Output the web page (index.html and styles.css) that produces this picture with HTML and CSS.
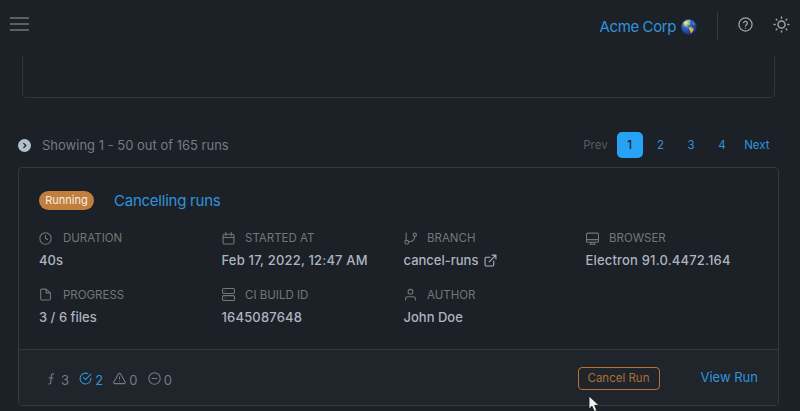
FILE: index.html
```html
<!DOCTYPE html>
<html lang="en">
<head>
<meta charset="utf-8">
<title>Runs</title>
<link rel="stylesheet" href="styles.css">
</head>
<body>
<svg width="0" height="0" class="defs">
  <symbol id="clock" viewBox="0 0 24 24"><circle cx="12" cy="12" r="10.500"/><path d="M12 6v6l4 2"/></symbol>
  <symbol id="calendar" viewBox="0 0 24 24"><rect x="2" y="4" width="20" height="18" rx="2"/><path d="M7 1v6M17 1v6M2 10h20"/></symbol>
  <symbol id="branch" viewBox="0 0 24 24"><path d="M4 2v13M20 9a11 11 0 0 1-11 9"/><circle cx="20" cy="5" r="3"/><circle cx="5" cy="19" r="3.500"/></symbol>
  <symbol id="monitor" viewBox="0 0 24 24"><rect x="1" y="2" width="22" height="17" rx="2"/><path d="M1 14h22M7 22.500h10M9 19v3M15 19v3"/></symbol>
  <symbol id="file" viewBox="0 0 24 24"><path d="M13 2H5a2 2 0 0 0-2 2v16a2 2 0 0 0 2 2h14a2 2 0 0 0 2-2V9zM13 2v7h7"/></symbol>
  <symbol id="server" viewBox="0 0 24 24"><rect x="1" y="1" width="22" height="9" rx="2"/><rect x="1" y="14" width="22" height="9" rx="2"/><path d="M5.500 5.500h.01M5.500 18.500h.01"/></symbol>
  <symbol id="user" viewBox="0 0 24 24"><path d="M21 22v-2a4 4 0 0 0-4-4H7a4 4 0 0 0-4 4v2"/><circle cx="12" cy="7" r="4.500"/></symbol>
  <symbol id="external" viewBox="0 0 24 24"><path d="M18 13v7a2 2 0 0 1-2 2H4a2 2 0 0 1-2-2V8a2 2 0 0 1 2-2h7M15 2h7v7M9.500 14.500L22 2"/></symbol>
  <symbol id="check" viewBox="0 0 24 24"><path d="M22 11v1a10 10 0 1 1-6-9.100M22 4L12 14l-3.500-3.500"/></symbol>
  <symbol id="warn" viewBox="0 0 24 24"><path d="M10.300 3.400L1.500 18.500a2 2 0 0 0 1.700 3h17.600a2 2 0 0 0 1.700-3L13.700 3.400a2 2 0 0 0-3.400 0zM12 9v4M12 17h.01"/></symbol>
  <symbol id="minus" viewBox="0 0 24 24"><circle cx="12" cy="12" r="10.500"/><path d="M7.500 12h9"/></symbol>
  <symbol id="help" viewBox="0 0 24 24"><circle cx="12" cy="12" r="10.500"/><path d="M9 9a3.100 3.100 0 0 1 6 1c0 2-3 2.500-3 4.500M12 17.800h.01"/></symbol>
  <symbol id="sun" viewBox="0 0 24 24"><circle cx="12" cy="12" r="5"/><path d="M12 1.500v1.500M12 21v1.500M1.500 12h1.500M21 12h1.500M4.500 4.500l1 1M18.500 18.500l1 1M4.500 19.500l1-1M18.500 5.500l1-1"/></symbol>
</svg>
<header class="topbar">
  <div class="burger"><i></i><i></i><i></i></div>
  <a class="org">Acme Corp
    <svg class="globe" viewBox="0 0 16 16"><defs><radialGradient id="sea" cx=".35" cy=".3" r=".75"><stop offset="0" stop-color="#5b9be4"/><stop offset=".5" stop-color="#2558b4"/><stop offset="1" stop-color="#172b68"/></radialGradient></defs><circle cx="8" cy="8" r="7.800" fill="url(#sea)"/><path d="M2 4Q4 1 7.500.8L10 2 8.500 3.800 9.500 5 7 6.300 6.500 8 4.500 7 3 7.300z" fill="#a9b987"/><path d="M3 3.500L6 2l1 2-2.500 2z" fill="#e7e4b0"/><path d="M7.500 8.500L10 8l3 2-1 2-2 2.500L9 12z" fill="#d9b13c"/><path d="M11 3l2 1 1 2-2-.5z" fill="#6c985c"/></svg>
  </a>
  <span class="rule"></span>
  <svg class="icon tool"><use href="#help"/></svg>
  <svg class="icon tool sun"><use href="#sun"/></svg>
</header>
<main>
  <section class="previous"></section>
  <div class="listbar">
    <svg class="toggle" viewBox="0 0 12 12"><circle cx="6" cy="6" r="6"/><path d="M5 3.800L7.200 6 5 8.200"/></svg>
    <span class="showing">Showing 1 - 50 out of 165 runs</span>
    <nav class="pages"><a class="prev">Prev</a><a class="current">1</a><a>2</a><a>3</a><a>4</a><a class="next">Next</a></nav>
  </div>
  <article class="card">
    <div class="body">
      <div class="heading"><span class="badge">Running</span><a class="title">Cancelling runs</a></div>
      <dl class="facts">
        <div><dt><svg class="icon"><use href="#clock"/></svg><span>DURATION</span></dt><dd>40s</dd></div>
        <div><dt><svg class="icon"><use href="#calendar"/></svg><span>STARTED AT</span></dt><dd class="numeric">Feb 17, 2022, 12:47 AM</dd></div>
        <div><dt><svg class="icon"><use href="#branch"/></svg><span>BRANCH</span></dt><dd>cancel-runs<svg class="icon ext"><use href="#external"/></svg></dd></div>
        <div><dt><svg class="icon"><use href="#monitor"/></svg><span>BROWSER</span></dt><dd class="numeric">Electron 91.0.4472.164</dd></div>
        <div><dt><svg class="icon"><use href="#file"/></svg><span>PROGRESS</span></dt><dd>3 / 6 files</dd></div>
        <div><dt><svg class="icon"><use href="#server"/></svg><span>CI BUILD ID</span></dt><dd class="numeric">1645087648</dd></div>
        <div><dt><svg class="icon"><use href="#user"/></svg><span>AUTHOR</span></dt><dd>John Doe</dd></div>
      </dl>
    </div>
    <footer class="foot">
      <div class="stats">
        <span class="stat flaky"><svg class="fn" viewBox="0 0 8 12"><path d="M7 1.300C5.300.4 4.500 1.300 4.300 3L3.800 9C3.600 11 2.600 11.300 1.500 10.800M1.500 5h5"/></svg>3</span>
        <span class="stat passed"><svg class="icon"><use href="#check"/></svg>2</span>
        <span class="stat failed"><svg class="icon"><use href="#warn"/></svg>0</span>
        <span class="stat"><svg class="icon"><use href="#minus"/></svg>0</span>
      </div>
      <button class="cancel">Cancel Run</button>
      <a class="view">View Run</a>
    </footer>
  </article>
</main>
<svg class="cursor" viewBox="0 0 12 18"><path d="M1 1v13l3-2.800 2.300 5.300 2.500-1.100L6.600 10.300H11z"/></svg>
</body>
</html>
```
FILE: styles.css
```css
* { box-sizing: border-box; }
body { margin: 0; width: 800px; height: 411px; overflow: hidden; background: #1c2027; color: #adb5c0; font-family: Inter, sans-serif; font-size: 13px; }
svg { display: block; flex: none; }
.defs { position: absolute; }
.icon { width: 13px; height: 13px; fill: none; stroke: currentColor; stroke-width: 2; stroke-linecap: round; stroke-linejoin: round; }
.topbar { height: 55px; display: flex; align-items: center; padding: 0 11px 4px 10px; }
.burger { width: 19px; height: 14px; display: flex; flex-direction: column; justify-content: space-between; margin-right: auto; margin-top: -3px; }
.burger i { height: 2px; background: #5c5e62; }
.org { display: flex; align-items: center; gap: 5px; font-size: 15px; letter-spacing: -.4px; color: #2e95dc; margin-top: 2px; }
.globe { width: 16px; height: 16px; }
.rule { width: 1px; height: 28px; background: #363b43; margin: 0 20px 0 20px; }
.tool { width: 15px; height: 15px; color: #a1a6ad; margin-top: -3px; }
.sun { margin-left: 20px; width: 17px; height: 17px; margin-right: -1px; }
.previous { height: 43px; margin: 0 25px 0 22px; border: 1px solid #30353b; border-top: 0; border-radius: 0 0 5px 5px; }
.listbar { display: flex; align-items: center; height: 26px; margin: 34px 31px 9px 18px; }
.toggle { width: 13px; height: 13px; fill: #b3bfcb; }
.toggle path { fill: none; stroke: #1c2027; stroke-width: 1.2; }
.showing { margin-left: 11px; font-size: 13px; color: #747b86; }
.pages { display: flex; align-items: center; margin-left: auto; font-size: 11.5px; color: #2e95dc; }
.pages a { width: 30.7px; text-align: center; }
.pages .prev { width: auto; color: #565c65; margin-right: 9px; }
.pages .current { width: 26px; height: 26px; line-height: 26px; border-radius: 5px; background: #27a3f5; color: #14202c; font-weight: 500; margin-right: 2.5px; }
.pages .next { width: auto; margin-left: 7px; margin-right: -.6px; }
.card { height: 239px; margin: 0 21px 0 18px; border: 1px solid #343940; border-radius: 4px; overflow: hidden; }
.body { height: 181px; padding: 22px 0 0 20px; }
.heading { display: flex; align-items: center; height: 20px; }
.badge { width: 55px; height: 19px; line-height: 19px; border-radius: 10px; background: #c27e3c; color: #f5eee7; font-size: 11px; text-align: center; }
.title { margin-left: 20px; font-size: 15px; letter-spacing: -.24px; color: #2e95dc; }
.facts { display: grid; grid-template-columns: repeat(4, 182px); grid-auto-rows: 56.5px; margin: 20px 0 0; }
dt { display: flex; align-items: center; height: 16px; color: #747779; font-size: 11.5px; }
dt .icon { margin-right: 10.5px; }
.facts div:nth-child(4n + 1) dt .icon { margin-right: 11px; }
.facts div:not(:nth-child(4n + 1)) { padding-left: .5px; }
dd { display: flex; align-items: center; height: 16px; margin: 6px 0 0; font-weight: 500; }
.numeric { letter-spacing: .18px; }
.ext { margin-left: 6px; }
.foot { height: 56px; display: flex; align-items: center; border-top: 1px solid #343940; background: #20242b; padding: 0 20px 0 28px; }
.stats { display: flex; color: #757b83; margin-top: 5px; margin-right: auto; }
.stat { display: flex; align-items: center; gap: 3px; margin-right: 10.2px; line-height: 16px; }
.stat svg { margin-top: -3px; }
.flaky { gap: 5px; }
.fn { width: 8px; height: 12px; fill: none; stroke: currentColor; stroke-width: 1.2; margin-right: 1px; }
.passed { color: #2e95dc; }
.cancel { width: 82px; height: 23px; padding: 0; border: 1px solid #b97335; border-radius: 4px; background: transparent; color: #ac6d38; font: 11.5px Inter, sans-serif; margin-top: 1px; }
.view { margin-left: 41px; font-size: 13px; color: #2e95dc; margin-top: -1px; }
.cursor { position: absolute; left: 588px; top: 395px; width: 12px; height: 18px; fill: #f0f0f0; stroke: #111418; stroke-width: .8; }
```
